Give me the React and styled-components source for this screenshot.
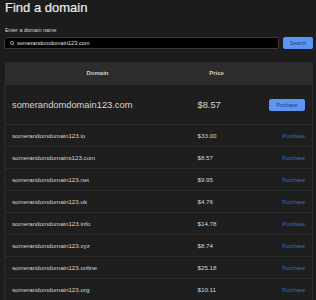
import React, { useState } from 'react'
import styled, { createGlobalStyle } from 'styled-components'

const GlobalStyle = createGlobalStyle`
  html, body {
    margin: 0;
    padding: 0;
    background: #1c1c1c;
    font-family: "Liberation Sans", Arial, sans-serif;
    overflow: hidden;
  }
`

const Page = styled.div`
  padding: 0 3px 0 4px;
`
const Title = styled.h1`
  margin: 0;
  padding-left: 1px;
  font-size: 13px;
  line-height: 16px;
  font-weight: 400;
  color: #ececec;
  -webkit-text-stroke: 0.2px #ececec;
`
const Label = styled.div`
  margin-top: 11px;
  padding-left: 1px;
  font-size: 5.4px;
  line-height: 7px;
  color: #d4d4d4;
`
const SearchRow = styled.div`
  display: flex;
  gap: 4px;
  margin-top: 3px;
`
const InputBox = styled.div`
  flex: 1;
  height: 12px;
  box-sizing: border-box;
  background: #000;
  border: 1px solid #3a3a3a;
  border-radius: 2px;
  display: flex;
  align-items: center;
  gap: 2px;
  padding-left: 5px;
`
const Input = styled.input`
  flex: 1;
  min-width: 0;
  background: transparent;
  border: none;
  outline: none;
  padding: 0;
  color: #e0e0e0;
  font-family: inherit;
  font-size: 5.6px;
`
const Button = styled.button`
  border: none;
  border-radius: 2px;
  background: #5d95f5;
  color: #1d3a78;
  font-family: inherit;
  font-size: 5px;
  padding: 0;
  width: ${p => p.$w}px;
  height: 12px;
  cursor: pointer;
`
const Table = styled.table`
  margin-top: 13px;
  width: 100%;
  border-collapse: collapse;
  background: #1e1e1e;
  table-layout: fixed;
`
const Th = styled.th`
  background: #2c2c2c;
  height: 22px;
  padding: 0;
  font-size: 6px;
  font-weight: 700;
  color: #cfcfcf;
  text-align: center;
`
const Row = styled.tr`
  border-top: 1px solid #2b2b2b;
  border-left: 1px solid #2b2b2b;
  border-right: 1px solid #2b2b2b;
`
const Td = styled.td`
  padding: 0 7px;
  height: ${p => (p.$big ? 39 : 21)}px;
  font-size: ${p => (p.$big ? 9.3 : 6.2)}px;
  color: #d6d6d6;
  text-align: ${p => p.$align || 'left'};
  white-space: nowrap;
`
const LinkBtn = styled.a`
  color: #3c6ac6;
  font-size: 5.4px;
  cursor: pointer;
`

const SearchIcon = () => (
  <svg width="5" height="5" viewBox="0 0 10 10" fill="none" stroke="#cfcfcf" strokeWidth="1.4">
    <circle cx="4" cy="4" r="3" />
    <path d="M6.3 6.3L9 9" />
  </svg>
)

const results = [
  ['somerandomdomain123.io', '$33.00'],
  ['somerandomdomains123.com', '$8.57'],
  ['somerandomdomain123.net', '$9.95'],
  ['somerandomdomain123.uk', '$4.76'],
  ['somerandomdomain123.info', '$14.78'],
  ['somerandomdomain123.xyz', '$8.74'],
  ['somerandomdomain123.online', '$25.18'],
  ['somerandomdomain123.org', '$10.11'],
]

const App = () => {
  const [query, setQuery] = useState('somerandomdomain123.com')
  return (
    <Page>
      <GlobalStyle />
      <Title>Find a domain</Title>
      <Label>Enter a domain name</Label>
      <SearchRow>
        <InputBox>
          <SearchIcon />
          <Input value={query} onChange={e => setQuery(e.target.value)} />
        </InputBox>
        <Button $w={30}>Search</Button>
      </SearchRow>
      <Table>
        <colgroup>
          <col style={{ width: 186 }} />
          <col style={{ width: 52 }} />
          <col />
        </colgroup>
        <thead>
          <tr>
            <Th>Domain</Th>
            <Th>Price</Th>
            <Th />
          </tr>
        </thead>
        <tbody>
          <Row>
            <Td $big>somerandomdomain123.com</Td>
            <Td $big>$8.57</Td>
            <Td $big $align="right"><Button $w={36}>Purchase</Button></Td>
          </Row>
          {results.map(([name, price]) => (
            <Row key={name}>
              <Td>{name}</Td>
              <Td>{price}</Td>
              <Td $align="right"><LinkBtn>Purchase</LinkBtn></Td>
            </Row>
          ))}
        </tbody>
      </Table>
    </Page>
  )
}

export default App
